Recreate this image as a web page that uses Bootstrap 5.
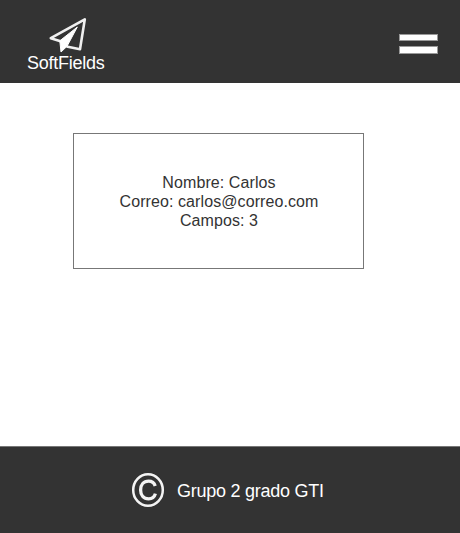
<!DOCTYPE html>
<html lang="es">
<head>
<meta charset="utf-8">
<meta name="viewport" content="width=device-width, initial-scale=1">
<title>SoftFields</title>
<link href="https://cdn.jsdelivr.net/npm/bootstrap@5.3.0/dist/css/bootstrap.min.css" rel="stylesheet">
<style>
  body { font-family: "Liberation Sans", Arial, sans-serif; font-size: 16px; line-height: 19px; color: #333; background: #fff; }
  .site-header { height: 83px; background: #333; padding: 17px 22px 0 27px; }
  .brand { width: 78px; font-size: 18px; line-height: 20px; letter-spacing: -.25px; }
  .brand svg { margin: 0 0 0 21px; }
  .menu-toggle { margin-top: 16px; line-height: 0; }
  .profile { width: 291px; height: 136px; margin: 50px 0 0 73px; padding: 39px 0 0 1px; border: 1px solid #777; letter-spacing: .09px; }
  .site-footer { height: 87px; background: #333; border-top: 1px solid #777; padding-left: 131px; gap: 12px; font-size: 18px; line-height: 20px; letter-spacing: -.26px; }
  .site-footer span { padding-top: 2px; }
</style>
</head>
<body class="d-flex flex-column vh-100 overflow-hidden">
<header class="site-header d-flex justify-content-between align-items-start text-white">
  <a class="brand d-block text-white text-decoration-none text-nowrap" href="#">
    <svg class="d-block" width="40" height="36" viewBox="0 0 40 36" fill="none" stroke="#f0f0f0" stroke-width="2.6" stroke-linejoin="round" aria-hidden="true">
      <path d="M12.5 24.3 2.8 21.2 36.8 2.4 32 32.3 18.5 29.5"/>
      <path d="M11.8 23.8 29.3 10 19 29.3 13 35Z" fill="#fff" stroke="#fff" stroke-width="1"/>
    </svg>
    SoftFields
  </a>
  <button class="menu-toggle btn p-0 border-0" type="button" aria-label="Menú">
    <svg width="39" height="21" viewBox="0 0 39 21" aria-hidden="true">
      <path fill="#999" d="M0 1h39v7H0zM0 13h39v8H0z"/>
      <path fill="#fff" d="M1 2h37v5H1zM1 14h37v6H1z"/>
    </svg>
  </button>
</header>
<main class="flex-grow-1">
  <section class="profile text-center">
    <div>Nombre: Carlos</div>
    <div>Correo: carlos@correo.com</div>
    <div>Campos: 3</div>
  </section>
</main>
<footer class="site-footer d-flex align-items-center text-white flex-shrink-0">
  <svg width="34" height="36" viewBox="0 0 34 36" fill="none" stroke="#f4f4f4" aria-hidden="true">
    <ellipse cx="17" cy="18" rx="14.8" ry="15.8" stroke-width="2.5"/>
    <path d="M24.4 21.6C23.3 25.4 20.8 26.9 17.6 26.9 12.6 26.9 9.6 23.3 9.6 18S12.6 9.1 17.6 9.1C20.8 9.1 23.2 10.8 24.2 13.9" stroke-width="3.3"/>
  </svg>
  <span>Grupo 2 grado GTI</span>
</footer>
<script src="https://cdn.jsdelivr.net/npm/bootstrap@5.3.0/dist/js/bootstrap.bundle.min.js"></script>
</body>
</html>
